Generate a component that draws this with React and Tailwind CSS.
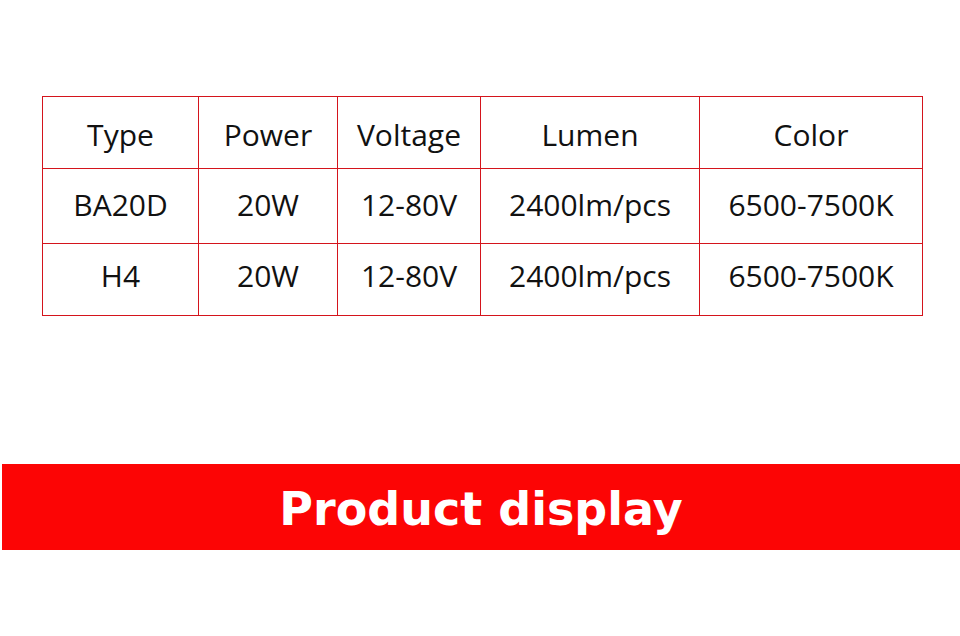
import React from "react";

const cols = [
  { w: "w-[156px]" },
  { w: "w-[139px]" },
  { w: "w-[143px]" },
  { w: "w-[219px]" },
  { w: "w-[223px]" },
];

const rows = [
  { h: "h-[72px]", pad: "pt-[5px]", cells: ["Type", "Power", "Voltage", "Lumen", "Color"] },
  { h: "h-[75px]", pad: "pb-[3px]", cells: ["BA20D", "20W", "12-80V", "2400lm/pcs", "6500-7500K"] },
  { h: "h-[72px]", pad: "pb-[8px]", cells: ["H4", "20W", "12-80V", "2400lm/pcs", "6500-7500K"] },
];

export default function App() {
  return (
    <div className="h-[636px] w-[960px] overflow-hidden bg-white">
      {/* Spec table */}
      <div className="pl-[42px] pt-[96px]">
        <table
          className="table-fixed border-collapse text-[30px] text-[#111]"
          style={{ fontFamily: '"Open Sans", sans-serif' }}
        >
          <colgroup>
            {cols.map((c, i) => (
              <col key={i} className={c.w} />
            ))}
          </colgroup>
          <tbody>
            {rows.map((r, ri) => (
              <tr key={ri} className={r.h}>
                {r.cells.map((t, ci) => (
                  <td
                    key={ci}
                    className={`border border-[#d4141c] p-0 ${r.pad} text-center align-middle leading-none`}
                  >
                    {t}
                  </td>
                ))}
              </tr>
            ))}
          </tbody>
        </table>
      </div>

      {/* Section banner */}
      <div className="mt-[148px] ml-[2px] flex h-[86px] items-center justify-center bg-[#fc0505]">
        <span
          className="pt-[4px] text-[46px] font-bold text-white"
          style={{ fontFamily: '"DejaVu Sans", sans-serif' }}
        >
          Product display
        </span>
      </div>
    </div>
  );
}
